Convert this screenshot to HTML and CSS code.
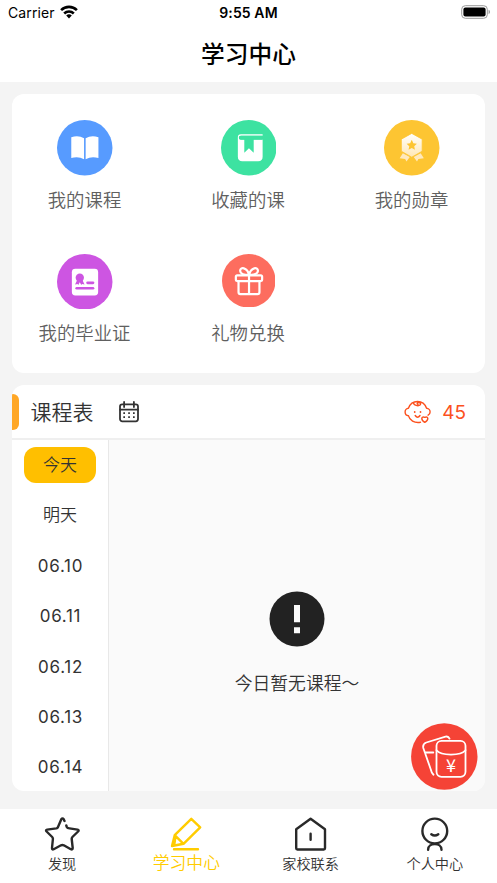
FILE: index.html
```html
<!DOCTYPE html>
<html lang="zh-CN">
<head>
<meta charset="utf-8">
<title>学习中心</title>
<link rel="stylesheet" href="styles.css">
</head>
<body>
<div class="app">
  <header class="top">
    <div class="status">
      <div class="carrier">Carrier
        <svg width="18" height="14" viewBox="0 0 18 14"><g fill="none" stroke="#000" stroke-width="2.6"><path d="M1.1 5.1a11.3 11.3 0 0 1 15.8 0"/><path d="M4.2 8.5a6.9 6.9 0 0 1 9.6 0"/></g><path d="M6.2 10.6a4 4 0 0 1 5.6 0L9 13.4z"/></svg>
      </div>
      <div class="clock">9:55 AM</div>
      <svg class="battery" width="30" height="14" viewBox="0 0 30 14"><rect x=".7" y=".7" width="25.6" height="12.6" rx="3.6" fill="none" stroke="#999" stroke-width="1"/><rect x="2.4" y="2.4" width="22.2" height="9.2" rx="2"/><path d="M27.6 4.8v4.4q1.4-.6 1.4-2.2t-1.4-2.2z" fill="#999"/></svg>
    </div>
    <h1>学习中心</h1>
  </header>

  <main>
    <section class="card menu">
      <div class="item"><svg class="ico" viewBox="0 0 56 56"><circle cx="28" cy="28" r="28" fill="#579bff"/><path fill="#fff" d="M14.4 17.5q7-2.6 12.9 1v21q-5.900-3.200-12.900-1.100zM41.800 17.500q-7-2.600-12.900 1v21q5.900-3.200 12.900-1.100z"/></svg><span>我的课程</span></div>
      <div class="item"><svg class="ico" viewBox="0 0 56 56"><circle cx="28" cy="28" r="28" fill="#3de2a1"/><path fill="#fff" d="M20 14.500H42v1.300H20a1.900 1.900 0 0 0 0 3.900H42V37q0 4.500-4.500 4.500H21.500q-4.500 0-4.500-4.500V17.500q0-3 3-3z"/><path fill="#3de2a1" d="M20 15.800H42v4.100h-9V33l-4.800-4.500-4.700 4.500V19.900H20a2 2 0 0 1 0-4.100z"/></svg><span>收藏的课</span></div>
      <div class="item"><svg class="ico" viewBox="0 0 56 56"><defs><linearGradient id="medal" x2="0" y2="1"><stop stop-color="#fff"/><stop offset="1" stop-color="#ffe7b4"/></linearGradient></defs><circle cx="28" cy="28" r="28" fill="#fdc532"/><path fill="#ffe9bd" d="m19 33.500 7 3.800-3.300 4.500-1.400-2.500-5.500-.6zM37 33.500l-7 3.800 3.300 4.500 1.400-2.500 5.500-.6z"/><path fill="url(#medal)" stroke="#fdc532" stroke-width=".8" d="M28 13.500 38.500 19.300V31.500L28 37.500 17.500 31.500V19.300z"/><path fill="#fdc532" d="m28 20 1.600 3.500 3.600.4-2.700 2.500.7 3.700-3.200-1.900-3.200 1.900.7-3.700-2.700-2.500 3.600-.4z"/></svg><span>我的勋章</span></div>
      <div class="item"><svg class="ico" viewBox="0 0 56 56"><circle cx="28" cy="28" r="28" fill="#cd55e2"/><rect x="15" y="14.800" width="26.500" height="27" rx="3.500" fill="#fff"/><g fill="#cd55e2"><circle cx="23" cy="24" r="4.200"/><path d="m20.500 26-2.300 4.800 2.500-.6.800 1.200 1.500-3 1.500 3 .8-1.200 2.500.6-2.300-4.800z"/><rect x="29.500" y="27.700" width="8.200" height="2.700" rx="1.350"/><rect x="18.500" y="33.200" width="19.200" height="2.700" rx="1.350"/></g></svg><span>我的毕业证</span></div>
      <div class="item"><svg class="ico gift" viewBox="0 0 56 56"><circle cx="28" cy="28" r="28" fill="#fd6d5f"/><g fill="none" stroke="#fff" stroke-width="2.300"><rect x="14.500" y="22.300" width="27.500" height="6" rx="1.500"/><path d="M17.300 28v12q0 2 2 2h17.900q2 0 2-2V28M28.300 22v20M28.300 22q-9-.2-9.300-4.200c-.2-4.400 7.400-4.500 9.300 4.200 2-8.700 9.500-8.600 9.300-4.200q-.3 4-9.300 4.200"/></g></svg><span>礼物兑换</span></div>
    </section>

    <section class="card schedule">
      <div class="head">
        <i class="mark"></i>
        <h2>课程表</h2>
        <svg class="cal" width="20" height="22" viewBox="0 0 20 22"><g fill="none" stroke="#333" stroke-width="1.800"><rect x="1" y="3.300" width="18" height="17" rx="2.200"/><path d="M1 8.600h18M5.100 1v5M14.900 1v5" stroke-linecap="round"/></g><g fill="#333"><path d="M4.300 11.300h1.700V13H4.300zM9.200 11.300h1.700V13H9.200zM14 11.300h1.700V13H14zM4.300 15.300h1.700V17H4.300zM9.200 15.300h1.700V17H9.200zM14 15.300h1.700V17H14z"/></g></svg>
        <div class="score">
          <svg width="28" height="24" viewBox="0 0 28 24"><g fill="none" stroke="#fc511e" stroke-width="1.400" stroke-linecap="round" stroke-linejoin="round"><path d="M16.500 22.200C10.200 23.300 5.600 20.100 4.500 15.800 2.300 15.500 1.100 13.600 1.100 11.900 1.100 10.200 2.500 8.400 4.400 8.300 6 3.900 9.500 1.500 13.500 1.500s7.500 2.400 9.100 6.800c2 .1 3.500 1.900 3.500 3.600 0 1.500-.8 2.600-2 3.300M9.600 2.600c-.2 2.900 4.800 3.900 6.700 2.200 1-1.300-.8-2.800-2.500-2-1 .5-.7 1.500.1 1.700M11.200 15.500q2.400 3.500 4.800 0"/><path d="M20.800 22.300q-3.200-1.700-3-4 .4-2 3-.9 2.600-1.100 3 .9.200 2.300-3 4z"/></g><circle cx="10.700" cy="12" r=".9" fill="#fc511e"/><circle cx="16.500" cy="12" r=".9" fill="#fc511e"/></svg>
          <b>45</b>
        </div>
      </div>
      <div class="body">
        <nav class="days">
          <span class="on">今天</span><span>明天</span><span class="date">06.10</span><span class="date">06.11</span><span class="date">06.12</span><span class="date">06.13</span><span class="date">06.14</span>
        </nav>
        <div class="empty">
          <svg width="56" height="56" viewBox="0 0 56 56"><circle cx="28" cy="28" r="27.500" fill="#222"/><path fill="#fafafa" d="M25 14h6v17.300h-6zM25 36.200h6v6h-6z"/></svg>
          <p>今日暂无课程～</p>
        </div>
      </div>
    </section>
  </main>

  <div class="fab">
    <svg width="68" height="68" viewBox="0 0 68 68"><circle cx="34.300" cy="33.500" r="33.200" fill="#f54336"/><g fill="none" stroke="#fff" stroke-width="1.800" stroke-linecap="round" stroke-linejoin="round"><rect x="26.500" y="17.800" width="29" height="36" rx="5"/><path d="M26.500 27.300q3.500 4.300 14.500 4.300t14.500-4.300M39.500 15.600q-1.200-2.700-4-1.900L16.300 19.500q-3.900 1.500-3 5.500l7.500 21.500q.7 3.500 2.700 5.200M14.800 29.500h8.500"/></g></svg>
    <span>¥</span>
  </div>

  <footer class="tabs">
    <div class="tab"><svg width="36" height="36" viewBox="0 0 36 36"><path d="M20.500 5 19.700 3.200Q18.500 1.500 17.300 3.200L14 11Q13.500 12.200 12.300 12.400L3.200 13.600Q1.300 14.100 2.600 15.500L8.200 21Q9 21.800 8.900 23L8 32Q8 34 9.700 33.200L17 29.300Q18.400 28.700 19.800 29.300L26.800 33.200Q28.700 34 28.700 32L27.700 23Q27.600 21.800 28.400 21L34.100 15.500Q35.400 14.100 33.500 13.600L25.500 12.400Q23.300 12.200 22.800 11L22.300 9.500"/></svg><span>发现</span></div>
    <div class="tab active"><svg width="36" height="36" viewBox="0 0 36 36"><path d="M23.300 2.800 32.200 11.300 15.500 27.800 4 30 6.700 19.200zM6.700 19.200l8.800 8.600M7.300 21.500l-1 7M6 33.200h24"/></svg><span>学习中心</span></div>
    <div class="tab"><svg width="36" height="36" viewBox="0 0 36 36"><path d="M17.600 2.700 32 13.300V32.300q0 1.200-1.200 1.200H4.400q-1.200 0-1.200-1.200V13.300zM17.600 17.700v6"/></svg><span>家校联系</span></div>
    <div class="tab"><svg width="36" height="36" viewBox="0 0 36 36"><circle cx="17.800" cy="15" r="12.400"/><path d="M14.300 18.200q3.500 2.800 7 0M11.100 33.700c0-7.500 13.400-7.500 13.400 0"/></svg><span>个人中心</span></div>
  </footer>
</div>
</body>
</html>
```
FILE: styles.css
```css
* { box-sizing: border-box; margin: 0; padding: 0; }
body { background: #f4f4f4; color: #333; font-family: Inter, "Noto Sans CJK SC", sans-serif; font-weight: 350; }
svg { display: block; flex: none; }
.app { position: relative; height: 883px; display: flex; flex-direction: column; }
.top { height: 82px; background: #fff; color: #000; }
.status { height: 26px; display: grid; grid-template-columns: 1fr auto 1fr; align-items: center; padding: 0 8px; font-size: 14px; }
.carrier { display: flex; gap: 5px; align-items: center; font-weight: 400; letter-spacing: .1px; margin-top: -1px; }
.carrier svg { margin-top: -2px; }
.clock { font-weight: 600; letter-spacing: .1px; margin-top: -1px; }
.battery { justify-self: end; margin: -2px -2px 0 0; }
h1 { font-size: 23.700px; line-height: 58px; font-weight: 500; text-align: center; }
main { padding: 12px 12px 0; display: flex; flex-direction: column; gap: 12px; flex: 1; }
.card { background: #fff; border-radius: 12px; overflow: hidden; }
.menu { height: 279px; padding-top: 26px; display: grid; grid-template-columns: repeat(3, 163.500px); grid-auto-rows: 133.500px; justify-content: center; }
.item { display: flex; flex-direction: column; align-items: center; font-size: 18.400px; color: #606060; line-height: 28px; }
.item span { margin-right: 1px; }
.ico { width: 55.500px; height: 55.500px; margin-bottom: 10px; }
.gift { width: 53.500px; height: 53.500px; margin-bottom: 12px; }
.schedule { height: 406px; display: flex; flex-direction: column; }
.head { height: 55px; border-bottom: 2px solid #efefef; display: flex; align-items: center; padding-right: 19px; }
.mark { width: 6.500px; height: 36px; background: #ffa726; border-radius: 0 6px 6px 0; }
h2 { font-size: 21px; line-height: 30px; font-weight: 350; margin: 2px 25.500px 0 12px; }
.score { margin-left: auto; display: flex; align-items: center; gap: 10px; color: #fc511e; }
.score b { font-weight: 400; font-size: 19px; margin-top: 2px; }
.body { flex: 1; display: flex; }
.days { width: 97px; border-right: 1px solid #e8e8e8; padding-top: 7px; display: flex; flex-direction: column; align-items: center; gap: 14.400px; font-size: 17px; }
.days span { width: 72px; height: 36px; line-height: 36px; text-align: center; border-radius: 12px; flex: none; }
.days .on { background: #ffbf00; }
.days .date { letter-spacing: .7px; padding-left: 1px; font-weight: 400; }
.empty { flex: 1; background: #fafafa; display: flex; flex-direction: column; align-items: center; padding-top: 151px; gap: 24px; font-size: 17.800px; line-height: 26px; }
.fab { position: absolute; left: 410px; top: 723px; width: 68px; height: 68px; }
.fab span { position: absolute; left: 31px; top: 31px; width: 20px; text-align: center; color: #fff; font: 400 18px/20px "Noto Sans CJK SC", sans-serif; }
.tabs { height: 74px; background: #fff; display: grid; grid-template-columns: repeat(4, 1fr); padding-top: 7px; font-size: 14.200px; line-height: 22px; }
.tab { display: flex; flex-direction: column; align-items: center; gap: 1px; }
.tab svg { fill: none; stroke: #292929; stroke-width: 2.400px; stroke-linecap: round; stroke-linejoin: round; }
.active { color: #ffcc00; font-size: 16.800px; line-height: 20px; }
.active svg { stroke: #ffcc00; }
```
